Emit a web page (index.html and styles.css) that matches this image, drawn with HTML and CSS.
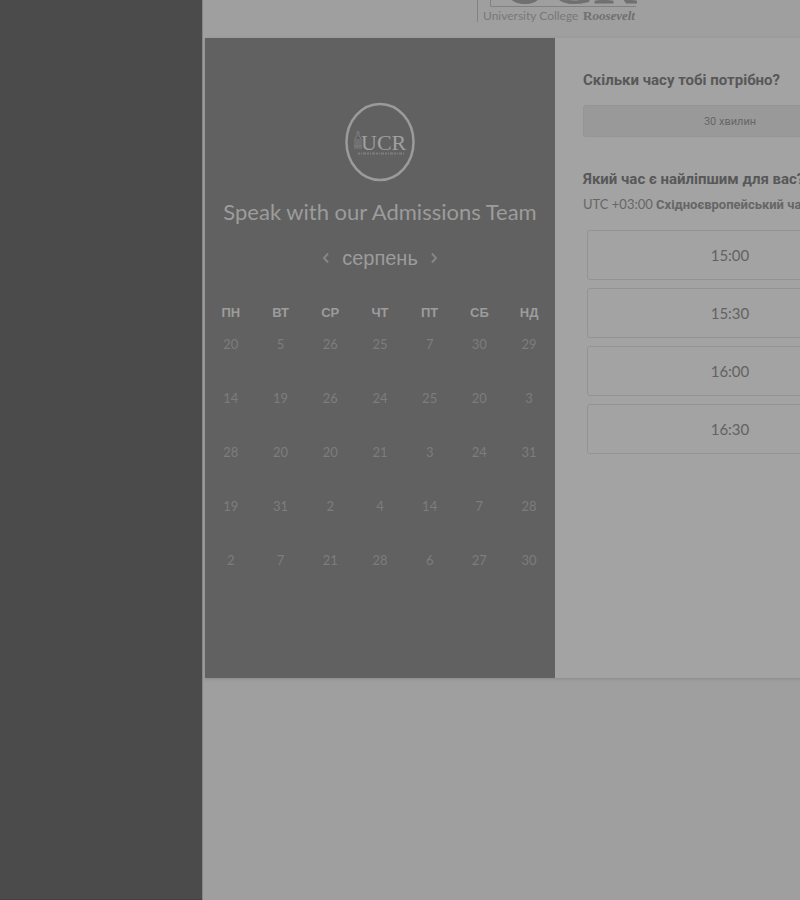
FILE: index.html
```
<!DOCTYPE html>
<html lang="uk">
<head>
<meta charset="utf-8">
<meta name="viewport" content="width=device-width, initial-scale=1">
<title>Speak with our Admissions Team</title>
<link rel="stylesheet" href="styles.css">
</head>
<body>
<div class="page">
  <aside class="side"></aside>
  <main class="content">
    <header class="brand">
      <svg class="brand-logo" viewBox="0 0 164 72" role="img" aria-label="University College Roosevelt">
        <path d="M4.500 0V70M17.500 0V54.500H163" fill="none" stroke="#828282"/>
        <text class="brand-big" x="28" y="51" fill="#707070" stroke="#707070">UCR</text>
        <text class="brand-small" x="10" y="68" fill="#787878">University College</text>
        <text class="brand-name" x="110" y="68" fill="#707070">R<tspan font-style="italic">oosevelt</tspan></text>
      </svg>
    </header>
    <div class="card">
      <section class="calendar">
        <svg class="avatar" viewBox="0 0 70 80" role="img" aria-label="UCR">
          <ellipse cx="35" cy="40" rx="33.500" ry="38" fill="none" stroke="#9b9b9b" stroke-width="2.500"/>
          <path d="M10 47V36l2-2v-3l1-2 1 2v3l2 2v11M12 47V37M14 47V37M9 44h8" fill="none" stroke="#808080"/>
          <text class="avatar-big" x="16" y="48" fill="#a0a0a0">UCR</text>
          <path d="M13 51.500h46" stroke="#7e7e7e" stroke-width="2" stroke-dasharray="2 1 1 1 3 1"/>
        </svg>
        <h1 class="title">Speak with our Admissions Team</h1>
        <div class="month">
          <button class="arrow" type="button" aria-label="Попередній місяць"><svg viewBox="0 0 8 12"><path d="M6 1.500L2 6l4 4.500"/></svg></button>
          <h2 class="month-name">серпень</h2>
          <button class="arrow" type="button" aria-label="Наступний місяць"><svg viewBox="0 0 8 12"><path d="M2 1.500L6 6l-4 4.500"/></svg></button>
        </div>
        <table class="days">
          <thead><tr><th>ПН</th><th>ВТ</th><th>СР</th><th>ЧТ</th><th>ПТ</th><th>СБ</th><th>НД</th></tr></thead>
          <tbody>
            <tr><td>20</td><td>5</td><td>26</td><td>25</td><td>7</td><td>30</td><td>29</td></tr>
            <tr><td>14</td><td>19</td><td>26</td><td>24</td><td>25</td><td>20</td><td>3</td></tr>
            <tr><td>28</td><td>20</td><td>20</td><td>21</td><td>3</td><td>24</td><td>31</td></tr>
            <tr><td>19</td><td>31</td><td>2</td><td>4</td><td>14</td><td>7</td><td>28</td></tr>
            <tr><td>2</td><td>7</td><td>21</td><td>28</td><td>6</td><td>27</td><td>30</td></tr>
          </tbody>
        </table>
      </section>
      <section class="booking">
        <h2 class="question">Скільки часу тобі потрібно?</h2>
        <button class="duration" type="button">30 хвилин</button>
        <h2 class="question">Який час є найліпшим для вас?</h2>
        <p class="zone"><span class="offset">UTC +03:00</span> Східноєвропейський час</p>
        <div class="slots">
          <button class="slot" type="button">15:00</button>
          <button class="slot" type="button">15:30</button>
          <button class="slot" type="button">16:00</button>
          <button class="slot" type="button">16:30</button>
        </div>
      </section>
    </div>
  </main>
</div>
</body>
</html>
```
FILE: styles.css
```
* { box-sizing: border-box; }
body {
  margin: 0;
  background: #9f9f9f;
  font-family: Lato, "Liberation Sans", sans-serif;
}
h1, h2, p { margin: 0; }
button { font: inherit; color: inherit; cursor: pointer; }

.page { display: flex; min-height: 100vh; overflow: hidden; }
.side { flex: 0 0 202px; background: #4b4b4b; border-bottom: 1px solid #483f43; }
.content {
  flex: 1 0 auto;
  padding-left: 2px;
  border-left: 1px solid #858585;
}
.brand { height: 38px; display: flex; align-items: flex-end; padding: 0 0 14px 268px; }
.brand-logo { flex: none; width: 164px; height: 72px; }
.brand-big { font: 66px "Liberation Serif", serif; }
.brand-small { font: 12px Lato, sans-serif; }
.brand-name { font: bold 13px "Liberation Serif", serif; }

.card {
  display: grid;
  grid-template-columns: minmax(0, 1fr) minmax(0, 1fr);
  width: 700px;
  min-height: 640px;
  background: #a3a3a3;
  box-shadow: 0 1px 3px #888;
}
.calendar {
  padding: 64px 1px 0;
  background: #616161;
  color: #9c9c9c;
  text-align: center;
}
.avatar { display: block; width: 70px; height: 80px; margin: 0 auto; }
.avatar-big { font: 22px "Liberation Serif", serif; }
.title { margin-top: 15px; font-size: 22px; line-height: 30px; font-weight: 400; white-space: nowrap; }
.month { display: flex; justify-content: center; align-items: center; gap: 12px; margin-top: 16px; }
.month-name { font: 400 20px/30px "Liberation Sans", sans-serif; }
.arrow { display: flex; padding: 0; border: 0; background: none; }
.arrow svg { width: 8px; height: 12px; fill: none; stroke: #858585; stroke-width: 2; }
.days { width: 100%; margin-top: 30px; border-collapse: collapse; table-layout: fixed; }
.days th { padding: 0; height: 20px; font: bold 13px/20px "Liberation Sans", sans-serif; }
.days td { padding: 11px 0 0; height: 54px; vertical-align: top; font-size: 13px; line-height: 20px; color: #7d7d7d; }

.booking { padding: 30px 28px; color: #666; }
.question { font: bold 15px/24px Roboto, sans-serif; color: #585858; white-space: nowrap; }
.duration {
  display: block;
  width: 100%;
  height: 32px;
  margin: 13px 0 30px;
  padding: 0;
  border: 1px solid #959595;
  border-radius: 3px;
  background: #999;
  font: 11px Roboto, sans-serif;
}
.zone { margin-top: 3px; font: bold 13px/20px Roboto, sans-serif; white-space: nowrap; }
.offset { font: 13px/20px Lato, sans-serif; }
.slots { display: grid; gap: 8px; margin-top: 15px; padding: 0 4px; }
.slot {
  height: 50px;
  border: 1px solid #939393;
  border-radius: 3px;
  background: #a3a3a3;
  color: #626262;
  font-size: 15px;
}
```
